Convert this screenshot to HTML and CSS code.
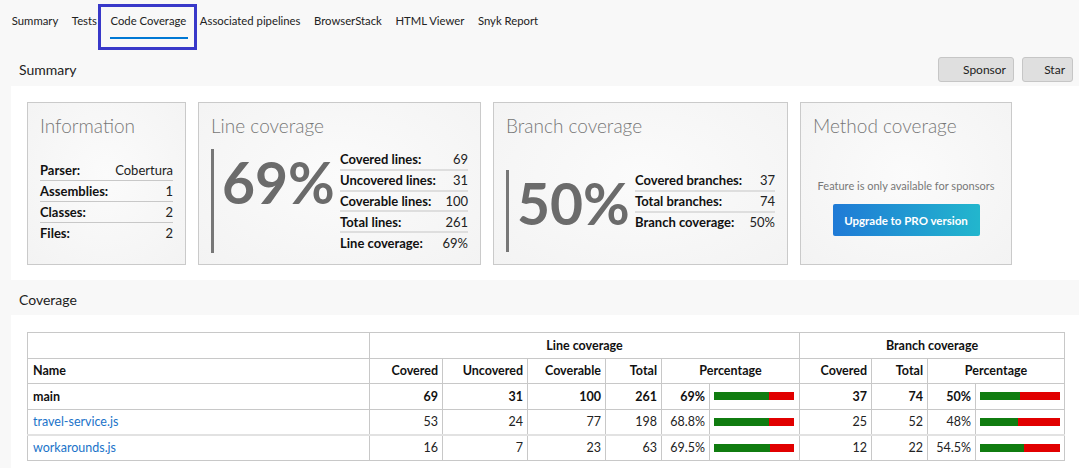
FILE: index.html
```html
<!DOCTYPE html>
<html lang="en">
<head>
<meta charset="utf-8">
<title>Code Coverage</title>
<link rel="stylesheet" href="styles.css">
</head>
<body>
<nav class="tabs">
  <div class="tab">Summary</div>
  <div class="tab">Tests</div>
  <div class="tab tab-active">Code Coverage</div>
  <div class="tab">Associated pipelines</div>
  <div class="tab">BrowserStack</div>
  <div class="tab">HTML Viewer</div>
  <div class="tab">Snyk Report</div>
</nav>

<div class="section-head">
  <span class="section-title">Summary</span>
  <div class="actions">
    <button class="btn btn-sponsor">Sponsor</button>
    <button class="btn btn-star">Star</button>
  </div>
</div>

<section class="panel panel-summary">
  <div class="card card-info">
    <h2 class="card-title">Information</h2>
    <table class="kv kv-info">
      <tr><th>Parser:</th><td>Cobertura</td></tr>
      <tr><th>Assemblies:</th><td>1</td></tr>
      <tr><th>Classes:</th><td>2</td></tr>
      <tr><th>Files:</th><td>2</td></tr>
    </table>
  </div>

  <div class="card card-line">
    <h2 class="card-title">Line coverage</h2>
    <div class="big-wrap big-wrap-line">
      <div class="big-num">69%</div>
      <table class="kv kv-line">
        <tr><th>Covered lines:</th><td>69</td></tr>
        <tr><th>Uncovered lines:</th><td>31</td></tr>
        <tr><th>Coverable lines:</th><td>100</td></tr>
        <tr><th>Total lines:</th><td>261</td></tr>
        <tr><th>Line coverage:</th><td>69%</td></tr>
      </table>
    </div>
  </div>

  <div class="card card-branch">
    <h2 class="card-title">Branch coverage</h2>
    <div class="big-wrap big-wrap-branch">
      <div class="big-num big-num-branch">50%</div>
      <table class="kv kv-branch">
        <tr><th>Covered branches:</th><td>37</td></tr>
        <tr><th>Total branches:</th><td>74</td></tr>
        <tr><th>Branch coverage:</th><td>50%</td></tr>
      </table>
    </div>
  </div>

  <div class="card card-method">
    <h2 class="card-title">Method coverage</h2>
    <p class="sponsor-note">Feature is only available for sponsors</p>
    <button class="btn-pro">Upgrade to PRO version</button>
  </div>
</section>

<div class="section-head section-head-coverage">
  <span class="section-title">Coverage</span>
</div>

<section class="panel panel-coverage">
  <table class="cov">
    <colgroup>
      <col class="c-name"><col class="c-cov"><col class="c-unc"><col class="c-cvb"><col class="c-tot">
      <col class="c-pv"><col class="c-pb"><col class="c-bcov"><col class="c-btot"><col class="c-pv"><col class="c-bpb">
    </colgroup>
    <thead>
      <tr>
        <th></th>
        <th colspan="6" class="center">Line coverage</th>
        <th colspan="4" class="center">Branch coverage</th>
      </tr>
      <tr>
        <th class="left">Name</th>
        <th class="right">Covered</th>
        <th class="right">Uncovered</th>
        <th class="right">Coverable</th>
        <th class="right">Total</th>
        <th colspan="2" class="center">Percentage</th>
        <th class="right">Covered</th>
        <th class="right">Total</th>
        <th colspan="2" class="center">Percentage</th>
      </tr>
    </thead>
    <tbody>
      <tr class="row-main">
        <td class="left">main</td>
        <td class="right">69</td>
        <td class="right">31</td>
        <td class="right">100</td>
        <td class="right">261</td>
        <td class="right">69%</td>
        <td class="barcell"><div class="bar"><div class="bar-green" style="width:69%"></div><div class="bar-red"></div></div></td>
        <td class="right">37</td>
        <td class="right">74</td>
        <td class="right">50%</td>
        <td class="barcell"><div class="bar"><div class="bar-green" style="width:50%"></div><div class="bar-red"></div></div></td>
      </tr>
      <tr>
        <td class="left"><a class="file-link" href="#">travel-service.js</a></td>
        <td class="right">53</td>
        <td class="right">24</td>
        <td class="right">77</td>
        <td class="right">198</td>
        <td class="right">68.8%</td>
        <td class="barcell"><div class="bar"><div class="bar-green" style="width:68.8%"></div><div class="bar-red"></div></div></td>
        <td class="right">25</td>
        <td class="right">52</td>
        <td class="right">48%</td>
        <td class="barcell"><div class="bar"><div class="bar-green" style="width:48%"></div><div class="bar-red"></div></div></td>
      </tr>
      <tr class="row-sep">
        <td class="left"><a class="file-link" href="#">workarounds.js</a></td>
        <td class="right">16</td>
        <td class="right">7</td>
        <td class="right">23</td>
        <td class="right">63</td>
        <td class="right">69.5%</td>
        <td class="barcell"><div class="bar"><div class="bar-green" style="width:69.5%"></div><div class="bar-red"></div></div></td>
        <td class="right">12</td>
        <td class="right">22</td>
        <td class="right">54.5%</td>
        <td class="barcell"><div class="bar"><div class="bar-green" style="width:54.5%"></div><div class="bar-red"></div></div></td>
      </tr>
    </tbody>
  </table>
</section>
</body>
</html>
```
FILE: styles.css
```css
*, *::before, *::after { box-sizing: border-box; }

body {
  margin: 0;
  background: #f8f8f8;
  font-family: "Segoe UI", Lato, "Noto Sans", sans-serif;
  color: #222;
  overflow: hidden;
}

/* Tabs */
.tabs {
  display: flex;
  height: 42px;
  padding-left: 5px;
}
.tab {
  position: relative;
  padding: 13px 6.8px 0;
  font-size: 11.3px;
  line-height: 16px;
  color: #222;
  white-space: nowrap;
}
.tab-active::before {
  content: "";
  position: absolute;
  left: 6px;
  right: 5px;
  top: 37px;
  height: 2px;
  background: #0078d4;
}
.tab-active::after {
  content: "";
  position: absolute;
  left: -6px;
  right: -4px;
  top: 4px;
  height: 46px;
  border: 3px solid #3838c9;
}

/* Section headers */
.section-head {
  display: flex;
  align-items: center;
  justify-content: space-between;
  height: 33px;
  margin-top: 11px;
  padding: 0 6px 0 19px;
}
.section-head-coverage {
  margin-top: 0;
  height: 35px;
  padding-top: 3px;
}
.section-title {
  font-size: 14px;
  color: #222;
}
.actions {
  display: flex;
  gap: 8px;
}
.btn {
  height: 25px;
  border: 1px solid #c6c6c6;
  border-radius: 3px;
  background: #dfdfdf;
  font-family: inherit;
  font-size: 12px;
  color: #222;
  text-align: right;
  padding: 0 7px 0 0;
}
.btn-sponsor { width: 76px; }
.btn-star { width: 51px; }

/* Panels */
.panel {
  margin-left: 11px;
  background: #fff;
}
.panel-summary {
  display: flex;
  gap: 12px;
  padding: 16px 0 15px 16px;
}

/* Cards */
.card {
  height: 163px;
  border: 1px solid #cacaca;
  background: radial-gradient(ellipse at 50% 45%, #fbfbfb 0%, #f3f3f3 100%);
  padding: 11px 12px 0;
  display: flex;
  flex-direction: column;
}
.card-info { width: 159px; }
.card-line { width: 283px; }
.card-branch { width: 295px; }
.card-method { width: 212px; align-items: center; }

.card-title {
  margin: 0;
  font-size: 19px;
  font-weight: 300;
  line-height: 24px;
  color: #777;
  white-space: nowrap;
}
.card-method .card-title { align-self: flex-start; }

.kv {
  border-collapse: collapse;
  font-size: 13px;
}
.kv th {
  text-align: left;
  font-weight: 700;
  color: #111;
  padding: 0;
  white-space: nowrap;
}
.kv td {
  text-align: right;
  color: #222;
  padding: 0;
  white-space: nowrap;
}
.kv-info {
  width: 133px;
  margin-top: 22px;
}
.kv-info th, .kv-info td { height: 20.7px; }
.kv-info tr + tr th, .kv-info tr + tr td { border-top: 1px solid #c8c8c8; }

.big-wrap {
  display: flex;
  align-items: flex-start;
  border-left: 3px solid #777;
  padding-left: 8px;
}
.big-wrap-line { margin-top: 11px; }
.big-wrap-branch { margin-top: 32px; }
.big-num {
  font-size: 57px;
  font-weight: 700;
  line-height: 67px;
  color: #6b6b6b;
  white-space: nowrap;
}
.big-num-branch { padding-bottom: 15px; }

.kv-line, .kv-branch { margin-left: auto; }
.kv-line { width: 128px; }
.kv-branch { width: 140px; }
.kv-line th, .kv-line td, .kv-branch th, .kv-branch td { height: 20.8px; }
.kv-line tr + tr th, .kv-line tr + tr td,
.kv-branch tr + tr th, .kv-branch tr + tr td { border-top: 2px solid #dedede; }

.sponsor-note {
  margin: 40px 0 0;
  font-size: 11px;
  line-height: 16px;
  color: #777;
  white-space: nowrap;
}
.btn-pro {
  margin-top: 10px;
  width: 147px;
  height: 32px;
  border: none;
  border-radius: 2px;
  background: linear-gradient(to right, #1f7ad6, #22b6cd);
  color: #fff;
  font-family: inherit;
  font-size: 11.5px;
  font-weight: 700;
}

/* Coverage table */
.panel-coverage {
  padding: 17px 14px 9px 16px;
}
.cov {
  border-collapse: collapse;
  table-layout: fixed;
  width: 1038px;
  font-size: 12.5px;
  color: #222;
}
.c-name { width: 342px; }
.c-cov { width: 73px; }
.c-unc { width: 85px; }
.c-cvb { width: 78px; }
.c-tot { width: 56px; }
.c-pv { width: 48px; }
.c-pb { width: 90px; }
.c-bcov { width: 72px; }
.c-btot { width: 56px; }
.c-bpb { width: 89px; }

.cov th, .cov td {
  border: 1px solid #c8c8c8;
  padding: 0 4px;
  height: 25.5px;
  white-space: nowrap;
}
.cov th { font-weight: 700; color: #111; }
.cov .left { text-align: left; padding-left: 5px; }
.cov .right { text-align: right; }
.cov .center { text-align: center; }
.row-main td { font-weight: 700; color: #111; }
.row-sep td { border-top: 2px solid #e2e2e2; }

.file-link {
  color: #1a73c9;
  text-decoration: none;
}

.barcell { padding: 0 6px 0 4px; }
.bar {
  display: flex;
  width: 80px;
  height: 8px;
}
.bar-green { background: #107c10; }
.bar-red { flex: 1; background: #e10000; }
```
